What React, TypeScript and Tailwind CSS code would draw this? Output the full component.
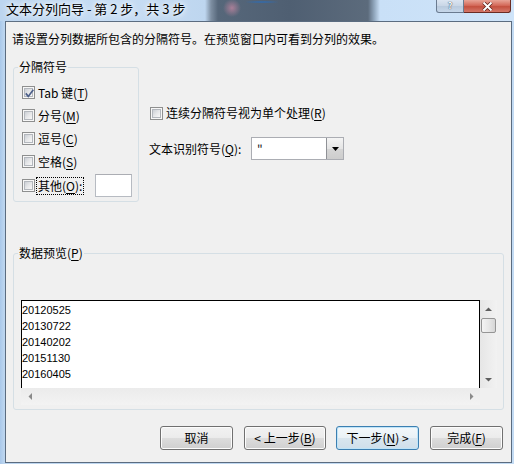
import React from 'react';

const Check = ({ checked = false }: { checked?: boolean }) => (
  <span className="relative block w-[13px] h-[13px] shrink-0 border border-[#8e8f8f] bg-[#f7f7f7] p-[1px]">
    <span className="block w-full h-full border border-[#b3b7bd] bg-[linear-gradient(135deg,#cbcfd5,#e6e7e9_50%,#f8f8f8)]" />
    {checked && (
      <svg className="absolute left-[1px] top-[1px]" width="11" height="11" viewBox="0 0 11 11">
        <path d="M1.8 5.4L4.3 8.4L9.3 1.8" fill="none" stroke="#4c5f8a" strokeWidth="1.7" />
      </svg>
    )}
  </span>
);

const Btn = ({ children, className = '', primary = false }: { children: React.ReactNode; className?: string; primary?: boolean }) => (
  <div
    className={
      primary
        ? `h-[24px] flex items-center justify-center rounded-[3px] border border-[#3c7fb1] shadow-[inset_0_0_0_1px_#bfe4f8] bg-[linear-gradient(#f3f8fb,#e9f1f6_50%,#d9e6ef_50%,#cfdfea)] text-[12px] leading-[16px] ${className}`
        : `h-[24px] flex items-center justify-center rounded-[3px] border border-[#707070] shadow-[inset_0_0_0_1px_#fcfcfc] bg-[linear-gradient(#f2f2f2,#ebebeb_50%,#dddddd_50%,#cfcfcf)] text-[12px] leading-[16px] ${className}`
    }
  >
    {children}
  </div>
);

const Arrow = ({ dir }: { dir: 'up' | 'down' | 'left' | 'right' }) => {
  const d = {
    up: 'M0 4L3.5 0.5L7 4Z',
    down: 'M0 0L3.5 3.5L7 0Z',
    left: 'M4 0L0.5 3.5L4 7Z',
    right: 'M0 0L3.5 3.5L0 7Z',
  }[dir];
  const horiz = dir === 'left' || dir === 'right';
  return (
    <svg width={horiz ? 4 : 7} height={horiz ? 7 : 4} viewBox={horiz ? '0 0 4 7' : '0 0 7 4'}>
      <path d={d} fill={horiz ? '#8a8a8a' : '#5e5e5e'} />
    </svg>
  );
};

const rows = ['20120525', '20130722', '20140202', '20151130', '20160405'];

export default function App() {
  return (
    <div className="w-[514px] h-[464px] overflow-hidden bg-[linear-gradient(90deg,#a9c8ea,#bcd5ef_4px,#c3dbf3)] text-black font-['Noto_Sans_CJK_SC','Noto_Sans',sans-serif]">
      {/* title bar */}
      <div className="h-[21px] flex items-start bg-[radial-gradient(circle_at_232px_8px,#a97f98_0,transparent_9px),radial-gradient(ellipse_at_262px_2px,#2c6cb6_0,transparent_18px),linear-gradient(90deg,#bcd5ef_0,#c7ddf4_120px,#bed6ef_205px,#7e8fa2_211px,#56677a_218px,#4f5f72_290px,#5c6b7c_368px,#8fa5bb_374px,#c9e0f7_380px,#cfe4f9_514px)]">
        <span className="ml-[6px] mt-[1px] text-[13px] leading-[15px] [text-shadow:0_0_5px_#fff,0_0_8px_#fff]">
          文本分列向导 - 第 2 步，共 3 步
        </span>
        <div className="ml-auto mr-[3px] flex">
          <div className="w-[28px] h-[13px] flex items-center justify-center border border-t-0 border-[#6a7b90] rounded-bl-[3px] bg-[linear-gradient(#dbe5f1,#c8d6e6_50%,#b9cadd_50%,#c6d7ea)] text-[9px] leading-[10px] font-bold text-[#f4f7fa] [text-shadow:0_0_1px_#3c4c60,0_0_1px_#3c4c60]">
            ?
          </div>
          <div className="w-[47px] h-[13px] flex items-center justify-center border border-t-0 border-l-0 border-[#6b2c24] rounded-br-[3px] bg-[linear-gradient(#e8a497,#d46a5a_45%,#c4503f_55%,#d5786a)]">
            <svg width="11" height="9" viewBox="0 0 11 9">
              <path d="M1.5 0.5L9.5 8.5M9.5 0.5L1.5 8.5" stroke="#5a1f18" strokeWidth="3.4" />
              <path d="M1.5 0.5L9.5 8.5M9.5 0.5L1.5 8.5" stroke="#ffffff" strokeWidth="2" />
            </svg>
          </div>
        </div>
      </div>

      {/* client area */}
      <div className="ml-[5px] w-[507px] h-[442px] border border-[#5b6c80] bg-[#f0f0f0] flex flex-col text-[12px] leading-[16px]">
        <p className="ml-[6px] mt-[9px]">请设置分列数据所包含的分隔符号。在预览窗口内可看到分列的效果。</p>

        <div className="flex mt-[12px] items-start">
          <fieldset className="ml-[7px] w-[126px] m-0 p-0 border border-[#d5dfe5] rounded-[3px]">
            <legend className="ml-[4px] px-[1px]">分隔符号</legend>
            <div className="pt-[6px] pb-[4px] flex flex-col">
              <div className="h-[23px] pl-[8px] flex items-center">
                <Check checked />
                <span className="ml-[3px]">Tab 键(<u className="underline-offset-2">T</u>)</span>
              </div>
              <div className="h-[23px] pl-[8px] flex items-center">
                <Check />
                <span className="ml-[3px]">分号(<u className="underline-offset-2">M</u>)</span>
              </div>
              <div className="h-[23px] pl-[8px] flex items-center">
                <Check />
                <span className="ml-[3px]">逗号(<u className="underline-offset-2">C</u>)</span>
              </div>
              <div className="h-[23px] pl-[8px] flex items-center">
                <Check />
                <span className="ml-[3px]">空格(<u className="underline-offset-2">S</u>)</span>
              </div>
              <div className="h-[23px] mt-[1px] pl-[8px] flex items-center">
                <Check />
                <span className="ml-[1px] px-[1px] border border-dotted border-black">其他(<u className="underline-offset-2">O</u>):</span>
                <div className="ml-[11px] w-[37px] h-[23px] border border-[#b7bbc2] border-t-[#abadb3] bg-white" />
              </div>
            </div>
          </fieldset>

          <div className="ml-[11px] flex flex-col">
            <div className="mt-[46px] h-[16px] flex items-center">
              <Check />
              <span className="ml-[3px]">连续分隔符号视为单个处理(<u className="underline-offset-2">R</u>)</span>
            </div>
            <div className="mt-[16px] -ml-[1px] h-[23px] flex items-center">
              <span className="w-[102px]">文本识别符号(<u className="underline-offset-2">Q</u>):</span>
              <div className="w-[93px] h-[23px] flex border border-[#abadb3] bg-white">
                <span className="flex-1 pl-[5px] pt-[3px] leading-[16px] text-[#202020]">"</span>
                <div className="w-[17px] h-full flex items-center justify-center border-l border-[#8f9196] bg-[linear-gradient(#f4f4f4,#e5e5e5_50%,#d6d6d6_50%,#cdcdcd)]">
                  <svg width="7" height="4" viewBox="0 0 7 4">
                    <path d="M0 0L3.5 4L7 0Z" fill="#000" />
                  </svg>
                </div>
              </div>
            </div>
          </div>
        </div>

        <fieldset className="mt-[43px] ml-[7px] w-[491px] m-0 p-0 border border-[#d5dfe5] rounded-[3px]">
          <legend className="ml-[4px] px-[1px]">数据预览(<u className="underline-offset-2">P</u>)</legend>
          <div className="pt-[39px] pl-[7px] pb-[4px]">
            <div className="grid grid-cols-[459px_17px]">
              <div className="h-[88px] border border-b-0 border-black bg-white pt-[1px] font-['Liberation_Sans',sans-serif] text-[11px] leading-[16px]">
                {rows.map((r) => (
                  <div key={r}>{r}</div>
                ))}
              </div>
              <div className="h-[88px] flex flex-col bg-[linear-gradient(90deg,#e6e6e6,#f2f2f2)]">
                <div className="h-[17px] flex items-center justify-center">
                  <Arrow dir="up" />
                </div>
                <div className="mx-[1px] mt-[1px] h-[15px] rounded-[2px] border border-[#959595] bg-[linear-gradient(90deg,#f4f4f4,#e8e8e8_50%,#d6d6d6)]" />
                <div className="flex-1" />
                <div className="h-[17px] flex items-center justify-center">
                  <Arrow dir="down" />
                </div>
              </div>
              <div className="h-[17px] flex items-center justify-between bg-[linear-gradient(#ebebeb,#f3f3f3)]">
                <div className="w-[17px] h-full flex items-center justify-center">
                  <Arrow dir="left" />
                </div>
                <div className="w-[17px] h-full flex items-center justify-center">
                  <Arrow dir="right" />
                </div>
              </div>
              <div className="h-[17px] bg-[#f0f0f0]" />
            </div>
          </div>
        </fieldset>

        <div className="mt-[16px] flex">
          <Btn className="ml-[154px] w-[73px]">取消</Btn>
          <Btn className="ml-[11px] w-[82px]">
            &lt; 上一步(<u className="underline-offset-2">B</u>)
          </Btn>
          <Btn primary className="ml-[10px] w-[83px]">
            下一步(<u className="underline-offset-2">N</u>) &gt;
          </Btn>
          <Btn className="ml-[11px] w-[73px]">
            完成(<u className="underline-offset-2">F</u>)
          </Btn>
        </div>
      </div>
    </div>
  );
}
